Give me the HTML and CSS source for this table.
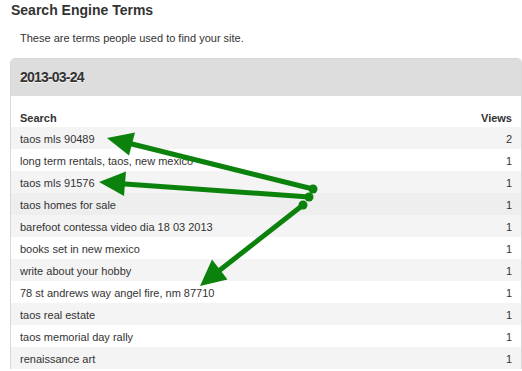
FILE: index.html
```html
<!DOCTYPE html>
<html>
<head>
<meta charset="utf-8">
<link rel="stylesheet" href="styles.css">
</head>
<body>
<div class="page">
  <h2 class="title">Search Engine Terms</h2>
  <p class="intro">These are terms people used to find your site.</p>
  <div class="panel">
    <div class="panel-head">2013-03-24</div>
    <table class="terms">
      <thead>
        <tr><th class="c-search">Search</th><th class="c-views">Views</th></tr>
      </thead>
      <tbody>
        <tr class="odd"><td>taos mls 90489</td><td class="num">2</td></tr>
        <tr><td>long term rentals, taos, new mexico</td><td class="num">1</td></tr>
        <tr class="odd"><td>taos mls 91576</td><td class="num">1</td></tr>
        <tr class="hover"><td>taos homes for sale</td><td class="num">1</td></tr>
        <tr class="odd"><td>barefoot contessa video dia 18 03 2013</td><td class="num">1</td></tr>
        <tr><td>books set in new mexico</td><td class="num">1</td></tr>
        <tr class="odd"><td>write about your hobby</td><td class="num">1</td></tr>
        <tr><td>78 st andrews way angel fire, nm 87710</td><td class="num">1</td></tr>
        <tr class="odd"><td>taos real estate</td><td class="num">1</td></tr>
        <tr><td>taos memorial day rally</td><td class="num">1</td></tr>
        <tr class="odd"><td>renaissance art</td><td class="num">1</td></tr>
      </tbody>
    </table>
  </div>
  <svg class="arrows" width="522" height="371" viewBox="0 0 522 371">
    <g stroke="#0b820b" stroke-width="5" stroke-linecap="round" fill="none">
      <line x1="313" y1="189" x2="132" y2="144"/>
      <line x1="309" y1="197" x2="125" y2="184"/>
      <line x1="303" y1="205" x2="220" y2="270"/>
    </g>
    <g fill="#0b820b">
      <polygon points="107,138 135,132.5 129,155.5"/>
      <polygon points="99,182 126,171.5 124,196"/>
      <polygon points="200,286 212,259.5 227.5,279.5"/>
      <circle cx="313" cy="189" r="4.5"/>
      <circle cx="309" cy="197" r="4.5"/>
      <circle cx="303" cy="205" r="4.5"/>
    </g>
  </svg>
</div>
</body>
</html>
```

FILE: styles.css
```css
html, body {
  margin: 0;
  padding: 0;
  background: #ffffff;
}

body {
  font-family: "Liberation Sans", Arial, sans-serif;
  color: #333333;
  overflow: hidden;
}

.page {
  position: relative;
  width: 522px;
  height: 371px;
}

.title {
  margin: 0 0 0 11px;
  font-size: 14px;
  font-weight: bold;
  line-height: 20px;
  color: #333333;
}

.intro {
  margin: 10px 0 12px 20px;
  font-size: 11px;
  line-height: 16px;
  color: #333333;
}

.panel {
  margin-left: 10px;
  width: 512px;
  box-sizing: border-box;
  border: 1px solid #d8d8d8;
  border-bottom: none;
  border-radius: 5px 5px 0 0;
  background: #ffffff;
}

.panel-head {
  height: 37px;
  background: #dddddd;
  border-radius: 4px 4px 0 0;
  padding-left: 9px;
  font-size: 14px;
  font-weight: bold;
  line-height: 37px;
  letter-spacing: -0.8px;
  color: #333333;
  text-shadow: 0 1px 0 #f4f4f4;
}

.terms {
  width: 100%;
  border-collapse: collapse;
  font-size: 11px;
  line-height: 16px;
}

.terms th {
  padding: 14px 9px 1px 9px;
  font-weight: bold;
  text-align: left;
  color: #333333;
}

.terms th.c-views {
  text-align: right;
}

.terms td {
  padding: 4px 9px 2px 9px;
  color: #333333;
}

.terms td.num {
  text-align: right;
}

.terms tr.odd {
  background: #f4f4f4;
}

.terms tr.hover {
  background: #eeeeee;
}

.arrows {
  position: absolute;
  left: 0;
  top: 0;
  pointer-events: none;
}
```
